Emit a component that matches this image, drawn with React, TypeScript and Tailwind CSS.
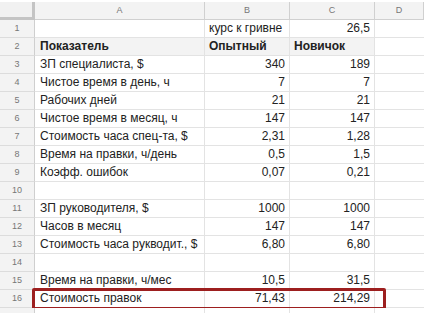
import React from 'react'

type Row = {
  n: number
  a?: string
  b?: string
  c?: string
  bLeft?: boolean
  bold?: boolean
}

const rows: Row[] = [
  { n: 1, b: 'курс к гривне', c: '26,5', bLeft: true },
  { n: 2, a: 'Показатель', b: 'Опытный', c: 'Новичок', bold: true },
  { n: 3, a: 'ЗП специалиста, $', b: '340', c: '189' },
  { n: 4, a: 'Чистое время в день, ч', b: '7', c: '7' },
  { n: 5, a: 'Рабочих дней', b: '21', c: '21' },
  { n: 6, a: 'Чистое время в месяц, ч', b: '147', c: '147' },
  { n: 7, a: 'Стоимость часа спец-та, $', b: '2,31', c: '1,28' },
  { n: 8, a: 'Время на правки, ч/день', b: '0,5', c: '1,5' },
  { n: 9, a: 'Коэфф. ошибок', b: '0,07', c: '0,21' },
  { n: 10 },
  { n: 11, a: 'ЗП руководителя, $', b: '1000', c: '1000' },
  { n: 12, a: 'Часов в месяц', b: '147', c: '147' },
  { n: 13, a: 'Стоимость часа рукводит., $', b: '6,80', c: '6,80' },
  { n: 14 },
  { n: 15, a: 'Время на правки, ч/мес', b: '10,5', c: '31,5' },
  { n: 16, a: 'Стоимость правок', b: '71,43', c: '214,29' },
  { n: 17 },
]

const cols = 'grid grid-cols-[35px_170px_85px_85px_1fr]'

function SheetRow({ row }: { row: Row }) {
  const bg = row.bold ? 'bg-[#f3f3f3]' : 'bg-white'
  const weight = row.bold ? 'font-bold' : ''
  return (
    <div className={`${cols} relative h-[18px] text-[12px] leading-[17px] text-[#222]`}>
      <div className="flex items-center justify-center border-r border-b border-r-[#cfcfcf] border-b-[#dcdcdc] bg-[#f3f3f3] text-[9px] text-[#777]">
        {row.n}
      </div>
      <div className={`${bg} ${weight} overflow-hidden whitespace-nowrap border-r border-b border-[#e3e3e3] px-[5px]`}>
        {row.a}
      </div>
      <div className={`${bg} ${weight} whitespace-nowrap border-r border-b border-[#e3e3e3] px-[4px] ${row.bLeft || row.bold ? 'text-left' : 'text-right'}`}>
        {row.b}
      </div>
      <div className={`${bg} ${weight} overflow-hidden whitespace-nowrap border-r border-b border-[#e3e3e3] px-[4px] ${row.bold ? 'text-left' : 'text-right'}`}>
        {row.c}
      </div>
      <div className="border-b border-[#e3e3e3] bg-white" />
      {row.n === 16 && (
        <div className="pointer-events-none absolute left-[32px] top-[-2px] h-[22px] w-[354px] rounded-[2px] border-[3px] border-[#9d1f1f]" />
      )}
    </div>
  )
}

export default function App() {
  return (
    <div className="h-[313px] w-[424px] overflow-hidden bg-white pt-[2px] font-['Liberation_Sans',Arial,sans-serif]">
      <div className={`${cols} h-[18px] text-[9px] leading-[17px] text-[#777]`}>
        <div className="border-r-[3px] border-b-[3px] border-[#c4c4c4] bg-[#f1f1f1]" />
        {['A', 'B', 'C', 'D'].map((l) => (
          <div key={l} className="border-r border-b border-[#d0d0d0] bg-[#f3f3f3] text-center">
            {l}
          </div>
        ))}
      </div>
      {rows.map((r) => (
        <SheetRow key={r.n} row={r} />
      ))}
    </div>
  )
}
